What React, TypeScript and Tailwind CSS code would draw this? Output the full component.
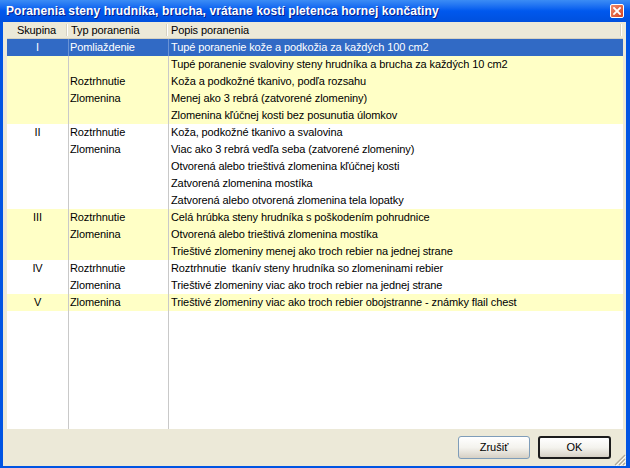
const rows = [
  { g: 'I', t: 'Pomliaždenie', p: 'Tupé poranenie kože a podkožia za každých 100 cm2', y: true, sel: true },
  { g: '', t: '', p: 'Tupé poranenie svaloviny steny hrudníka a brucha za každých 10 cm2', y: true },
  { g: '', t: 'Roztrhnutie', p: 'Koža a podkožné tkanivo, podľa rozsahu', y: true },
  { g: '', t: 'Zlomenina', p: 'Menej ako 3 rebrá (zatvorené zlomeniny)', y: true },
  { g: '', t: '', p: 'Zlomenina kľúčnej kosti bez posunutia úlomkov', y: true },
  { g: 'II', t: 'Roztrhnutie', p: 'Koža, podkožné tkanivo a svalovina' },
  { g: '', t: 'Zlomenina', p: 'Viac ako 3 rebrá vedľa seba (zatvorené zlomeniny)' },
  { g: '', t: '', p: 'Otvorená alebo trieštivá zlomenina kľúčnej kosti' },
  { g: '', t: '', p: 'Zatvorená zlomenina mostíka' },
  { g: '', t: '', p: 'Zatvorená alebo otvorená zlomenina tela lopatky' },
  { g: 'III', t: 'Roztrhnutie', p: 'Celá hrúbka steny hrudníka s poškodením pohrudnice', y: true },
  { g: '', t: 'Zlomenina', p: 'Otvorená alebo trieštivá zlomenina mostíka', y: true },
  { g: '', t: '', p: 'Trieštivé zlomeniny menej ako troch rebier na jednej strane', y: true },
  { g: 'IV', t: 'Roztrhnutie', p: 'Roztrhnutie\u00a0 tkanív steny hrudníka so zlomeninami rebier' },
  { g: '', t: 'Zlomenina', p: 'Trieštivé zlomeniny viac ako troch rebier na jednej strane' },
  { g: 'V', t: 'Zlomenina', p: 'Trieštivé zlomeniny viac ako troch rebier obojstranne - známky flail chest', y: true },
];

const App = () => {
  return (
    <div
      className="w-[630px] h-[468px] flex flex-col bg-[#0054e3] overflow-hidden text-black"
      style={{ fontFamily: '"Liberation Sans", Arial, sans-serif' }}
    >
      {/* title bar */}
      <div className="h-[22px] shrink-0 flex items-center pl-[6px] pr-[6px] bg-gradient-to-b from-[#3b8cf5] via-[#0058ee] to-[#0050dd]">
        <span className="flex-1 text-white font-bold text-[12px] leading-none tracking-[0.1px] [text-shadow:1px_1px_0_#0a1e8c]">
          Poranenia steny hrudníka, brucha, vrátane kostí pletenca hornej končatiny
        </span>
        <div className="w-[14px] h-[14px] rounded-[2px] border border-white bg-gradient-to-br from-[#f08a6a] to-[#d4401e] flex items-center justify-center">
          <svg width="8" height="8" viewBox="0 0 8 8">
            <path d="M1 1 L7 7 M7 1 L1 7" stroke="white" strokeWidth="1.8" strokeLinecap="square" />
          </svg>
        </div>
      </div>

      {/* body */}
      <div className="flex-1 flex flex-col bg-[#ece9d8] ml-[3px] mr-[4px] mb-[2px]">
        <div className="h-[407px] ml-[4px] mr-[3px] bg-white flex flex-col text-[11px] tracking-[-0.1px]">
          {/* header */}
          <div className="h-[17px] shrink-0 flex bg-[#ece9d8] border-b border-[#d6d2c2] leading-[16px]">
            <div className="w-[59px] text-center">Skupina</div>
            <div className="w-[2px] my-[2px] border-l border-[#d6d2c2] bg-white" />
            <div className="w-[98px] pl-[3px]">Typ poranenia</div>
            <div className="w-[2px] my-[2px] border-l border-[#d6d2c2] bg-white" />
            <div className="flex-1 pl-[3px]">Popis poranenia</div>
            <div className="w-[2px] my-[2px] border-l border-[#d6d2c2] bg-white" />
            <div className="w-[1px]" />
          </div>
          {rows.map((r, i) => (
            <div
              key={i}
              className={`h-[17px] shrink-0 flex leading-[17px] ${r.sel ? 'bg-[#316ac5] text-white' : r.y ? 'bg-[#ffffc6]' : 'bg-white'}`}
            >
              <div className={`w-[62px] text-center border-r ${r.sel ? 'border-[#6a93d6]' : 'border-[#c9c9c9]'}`}>{r.g}</div>
              <div className={`w-[100px] pl-[1px] border-r ${r.sel ? 'border-[#6a93d6]' : 'border-[#c9c9c9]'}`}>{r.t}</div>
              <div className="flex-1 pl-[2px] whitespace-nowrap">{r.p}</div>
            </div>
          ))}
          <div className="flex-1 flex">
            <div className="w-[62px] border-r border-[#c9c9c9]" />
            <div className="w-[100px] border-r border-[#c9c9c9]" />
            <div className="flex-1" />
          </div>
        </div>

        {/* buttons */}
        <div className="flex-1 relative flex justify-end items-start pt-[7px] pr-[15px] gap-[8px] text-[11px]">
          <button className="w-[72px] h-[23px] rounded-[3px] border border-[#7f9db9] bg-gradient-to-b from-white via-[#f4f3ee] to-[#d6d0c5] flex items-center justify-center">
            Zrušiť
          </button>
          <button className="w-[73px] h-[23px] rounded-[3px] border-2 border-[#1c1c1c] bg-gradient-to-b from-white via-[#f4f3ee] to-[#d6d0c5] flex items-center justify-center">
            OK
          </button>
          <svg className="absolute right-[0px] bottom-[0px]" width="13" height="13" viewBox="0 0 13 13">
            <path d="M12 2 L2 12 M12 6 L6 12 M12 10 L10 12" stroke="#aca899" strokeWidth="1.2" />
            <path d="M13 3 L3 13 M13 7 L7 13 M13 11 L11 13" stroke="#fff" strokeWidth="0.8" />
          </svg>
        </div>
      </div>
    </div>
  );
};

export default App;
